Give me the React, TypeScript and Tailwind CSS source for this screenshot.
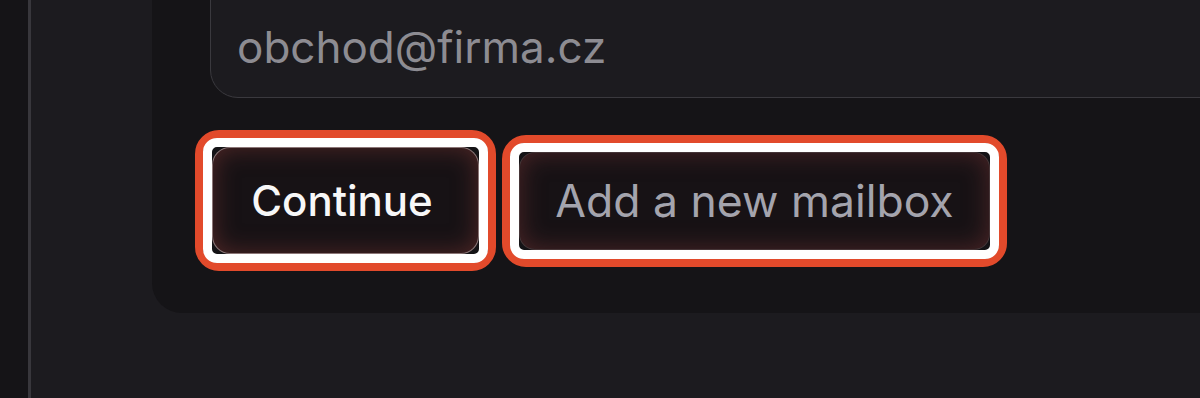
import React from "react";

export default function App() {
  return (
    <div
      className="flex h-[398px] w-[1200px] overflow-hidden bg-[#1c1b1f]"
      style={{ fontFamily: "Inter, 'Noto Sans', sans-serif" }}
    >
      <div className="w-[28px] shrink-0 bg-[#151417]" />
      <div className="w-[3px] shrink-0 bg-[#38373c]" />
      <main className="flex flex-1 flex-col justify-end overflow-hidden pb-[85px] pl-[121px]">
        <div className="flex w-[1200px] shrink-0 flex-col gap-[32px] rounded-[30px] bg-[#151417] pb-[42px] pl-[43px]">
          <div className="ml-[15px] flex h-[140px] w-[1100px] items-end rounded-[28px] border border-[#3a393e] bg-[#1c1b1f] pb-[24px] pl-[26px]">
            <span className="text-[44px] leading-[52px] text-[#8d8c92]">obchod@firma.cz</span>
          </div>
          <div className="flex items-center gap-[6px]">
            <div className="rounded-[24px] border-[8px] border-[#e24a2b] bg-[#141316]">
              <div className="rounded-[14px] border-[9px] border-white bg-[#141316] p-0">
                <button className="flex h-[107px] w-[267px] items-center justify-center rounded-[18px] border border-[#d9b9b9]/60 bg-[#171215] pr-[7px] text-[42px] font-medium leading-[52px] text-[#f7f7f7] shadow-[inset_0_0_24px_rgba(140,60,55,0.5)]">
                  Continue
                </button>
              </div>
            </div>
            <div className="rounded-[24px] border-[8px] border-[#e24a2b] bg-[#141316]">
              <div className="rounded-[14px] border-[9px] border-white bg-[#141316]">
                <button className="flex h-[98px] w-[471px] items-center justify-center rounded-[16px] border border-[#5a4446]/70 bg-[#171215] text-[44.5px] font-normal leading-[52px] text-[#a4a4ad] shadow-[inset_0_0_24px_rgba(130,55,55,0.5)]">
                  Add a new mailbox
                </button>
              </div>
            </div>
          </div>
        </div>
      </main>
    </div>
  );
}
